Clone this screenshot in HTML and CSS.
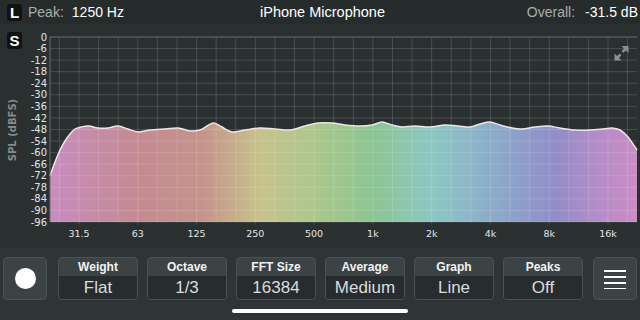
FILE: index.html
```html
<!DOCTYPE html>
<html lang="en">
<head>
    <meta charset="UTF-8">
    <meta name="viewport" content="width=device-width, initial-scale=1.0">
    <title>Spectrum Analyzer</title>
    <link rel="stylesheet" href="styles.css">
</head>
<body>

    <div class="topbar">
        <div class="side">
            <span class="badge">L</span>
            <span class="muted">Peak:</span>
            <span class="reading">1250 Hz</span>
        </div>
        <div class="title">iPhone Microphone</div>
        <div class="side right">
            <span class="muted">Overall:</span>
            <span class="reading">-31.5 dB</span>
        </div>
    </div>

    <div class="chart">
        <span class="badge badge-s">S</span>
        <svg id="plot" width="640" height="224" viewBox="0 24 640 224">
            <defs>
                <linearGradient id="rainbow" x1="50" y1="0" x2="637" y2="0" gradientUnits="userSpaceOnUse">
                    <stop offset="0" stop-color="#c98cbf"/>
                    <stop offset="0.15" stop-color="#c58a92"/>
                    <stop offset="0.26" stop-color="#c4948a"/>
                    <stop offset="0.36" stop-color="#c8c38d"/>
                    <stop offset="0.46" stop-color="#a9c78c"/>
                    <stop offset="0.55" stop-color="#8dc592"/>
                    <stop offset="0.65" stop-color="#8cc8c4"/>
                    <stop offset="0.75" stop-color="#8cadc9"/>
                    <stop offset="0.86" stop-color="#928dc9"/>
                    <stop offset="0.95" stop-color="#bb8cc8"/>
                    <stop offset="1" stop-color="#c98dc2"/>
                </linearGradient>
            </defs>
            <path id="area" fill="url(#rainbow)"/>
            <g id="grid" class="grid"></g>
            <path id="curve" class="curve"/>
            <line class="frame" x1="50" y1="37" x2="637" y2="37"/>
            <line class="frame" x1="50" y1="37" x2="50" y2="222"/>
            <g id="ylabels" class="ticks"></g>
            <g id="xlabels" class="ticks xticks"></g>
            <text class="axis-title" transform="translate(16,130) rotate(-90)" text-anchor="middle">SPL (dBFS)</text>
            <!-- expand icon -->
            <g class="expand">
                <polygon points="628.5,46 628.5,53 621.5,46"/>
                <line x1="626" y1="48.5" x2="622.5" y2="52"/>
                <polygon points="614.5,60.5 614.5,53.5 621.5,60.5"/>
                <line x1="617" y1="58" x2="620.5" y2="54.5"/>
            </g>
        </svg>
    </div>

    <div class="toolbar">
        <div class="btn btn-icon record"><span class="dot"></span></div>
        <div class="btn"><div class="btn-label">Weight</div><div class="btn-value">Flat</div></div>
        <div class="btn"><div class="btn-label">Octave</div><div class="btn-value">1/3</div></div>
        <div class="btn"><div class="btn-label">FFT Size</div><div class="btn-value">16384</div></div>
        <div class="btn"><div class="btn-label">Average</div><div class="btn-value">Medium</div></div>
        <div class="btn"><div class="btn-label">Graph</div><div class="btn-value">Line</div></div>
        <div class="btn"><div class="btn-label">Peaks</div><div class="btn-value">Off</div></div>
        <div class="btn btn-icon menu">
            <svg width="22" height="20" viewBox="0 0 22 20">
                <rect x="0" y="1" width="22" height="2"/>
                <rect x="0" y="7" width="22" height="2"/>
                <rect x="0" y="13" width="22" height="2"/>
                <rect x="0" y="19" width="22" height="1.6"/>
            </svg>
        </div>
        <div class="home-bar"></div>
    </div>

    <script>
        const NS = 'http://www.w3.org/2000/svg';
        const top0 = 37, bottom = 222, left = 50, right = 637;
        const rowH = (bottom - top0) / 16;
        const step = (608 - 79) / 27;

        function add(parent, tag, attrs, text) {
            const el = document.createElementNS(NS, tag);
            for (const k in attrs) el.setAttribute(k, attrs[k]);
            if (text) el.textContent = text;
            document.getElementById(parent).appendChild(el);
        }

        // grid rows and dB labels
        for (let i = 0; i <= 16; i++) {
            const y = top0 + i * rowH;
            if (i > 0) add('grid', 'line', { x1: left, y1: y, x2: right, y2: y });
            add('ylabels', 'text', { x: 47, y: y + 3.6, 'text-anchor': 'end' }, i === 0 ? '0' : '-' + i * 6);
        }

        // third octave columns
        for (let k = -1; k <= 28; k++) {
            const x = 79 + k * step;
            add('grid', 'line', { x1: x, y1: top0, x2: x, y2: bottom });
        }

        // octave labels
        const names = ['31.5', '63', '125', '250', '500', '1k', '2k', '4k', '8k', '16k'];
        names.forEach((n, i) => {
            const x = 79 + i * 3 * step;
            add('xlabels', 'text', { x: x, y: 237, 'text-anchor': 'middle' }, n);
            add('grid', 'line', { x1: x, y1: bottom, x2: x, y2: bottom + 2.5 });
        });

        // spectrum shape
        const pts = [
            [50,176],[55,162],[60,150],[65,141],[70,134],[75,129],[81,127],[89,126],[98,128],
            [108,128],[118,126],[128,129],[138,132],[150,130],[165,129],[178,128],[190,131],
            [200,130],[207,126],[214,123],[222,127],[232,132],[245,130],[260,128],[275,129],
            [290,130],[305,126],[318,123],[332,123],[345,125],[360,126],[372,125],[382,122],
            [392,125],[402,127],[415,126],[430,127],[445,125],[458,126],[470,127],[480,124],
            [490,122],[500,125],[512,128],[522,129],[535,127],[548,126],[560,128],[575,130],
            [590,130],[603,129],[612,128],[620,130],[628,137],[637,150]
        ];
        let d = 'M' + pts[0][0] + ',' + pts[0][1];
        for (let i = 0; i < pts.length - 1; i++) {
            const p0 = pts[i - 1] || pts[i], p1 = pts[i], p2 = pts[i + 1], p3 = pts[i + 2] || p2;
            const c1x = p1[0] + (p2[0] - p0[0]) / 6, c1y = p1[1] + (p2[1] - p0[1]) / 6;
            const c2x = p2[0] - (p3[0] - p1[0]) / 6, c2y = p2[1] - (p3[1] - p1[1]) / 6;
            d += ' C' + c1x.toFixed(1) + ',' + c1y.toFixed(1) + ' ' + c2x.toFixed(1) + ',' + c2y.toFixed(1) + ' ' + p2[0] + ',' + p2[1];
        }
        document.getElementById('curve').setAttribute('d', d);
        document.getElementById('area').setAttribute('d', d + ' L' + right + ',' + bottom + ' L' + left + ',' + bottom + ' Z');
    </script>
</body>
</html>
```

FILE: styles.css
```css
body {
    margin: 0;
    width: 640px;
    height: 320px;
    overflow: hidden;
    background-color: #2a3030;
    font-family: "Liberation Sans", Arial, sans-serif;
    color: #ffffff;
}
.topbar {
    height: 24px;
    display: grid;
    grid-template-columns: 1fr auto 1fr;
    align-items: center;
    padding: 0 2px 0 7px;
    background-color: #262c2c;
    font-size: 14px;
}
.side {
    display: flex;
    align-items: center;
}
.side.right {
    justify-content: flex-end;
}
.muted {
    color: #a9adad;
    margin-right: 8px;
}
.right .muted {
    margin-right: 10px;
}
.reading {
    color: #ffffff;
}
.title {
    color: #ffffff;
    font-size: 14.5px;
}
.badge {
    width: 15px;
    height: 17px;
    border-radius: 3px;
    background-color: #111313;
    color: #ffffff;
    font-weight: bold;
    font-size: 15px;
    line-height: 17px;
    text-align: center;
    margin-right: 6px;
    display: inline-block;
}
.chart {
    position: relative;
    height: 224px;
}
.chart svg {
    display: block;
}
.badge-s {
    position: absolute;
    left: 7px;
    top: 8px;
}
.grid line {
    stroke: rgba(255, 255, 255, 0.14);
    stroke-width: 1;
}
.frame {
    stroke: #687070;
    stroke-width: 1;
}
.curve {
    fill: none;
    stroke: #ece6e6;
    stroke-width: 1.5;
}
.ticks text {
    font-family: "DejaVu Sans", Verdana, sans-serif;
    font-size: 10px;
    fill: #e2e5e5;
}
.xticks text {
    font-size: 9.5px;
}
.axis-title {
    font-family: "DejaVu Sans", Verdana, sans-serif;
    font-weight: bold;
    font-size: 10px;
    fill: #868c8c;
}
.expand polygon {
    fill: #8a9090;
}
.expand line {
    stroke: #8a9090;
    stroke-width: 2.5;
}
.toolbar {
    position: relative;
    height: 72px;
    box-sizing: border-box;
    display: flex;
    gap: 9px;
    padding: 9px 3px 0;
    background-color: #2f3536;
}
.btn {
    width: 80px;
    height: 43px;
    box-sizing: border-box;
    display: flex;
    flex-direction: column;
    background-color: #3c4344;
    border: 1px solid #4a5253;
    border-radius: 4px;
    overflow: hidden;
}
.btn-label {
    height: 18px;
    line-height: 19px;
    text-align: center;
    font-size: 12px;
    font-weight: bold;
    color: #f2f2f2;
}
.btn-value {
    flex: 1;
    background-color: #272d2e;
    text-align: center;
    font-size: 17px;
    line-height: 23px;
    color: #d8dcdc;
}
.btn-icon {
    width: 44px;
    align-items: center;
    justify-content: center;
}
.record {
    margin-right: 2px;
}
.menu {
    margin-left: 1px;
}
.menu svg {
    fill: #ffffff;
}
.dot {
    width: 21px;
    height: 21px;
    border-radius: 50%;
    background-color: #ffffff;
}
.home-bar {
    position: absolute;
    left: 232px;
    bottom: 7px;
    width: 176px;
    height: 4px;
    border-radius: 2px;
    background-color: #ffffff;
}
```
